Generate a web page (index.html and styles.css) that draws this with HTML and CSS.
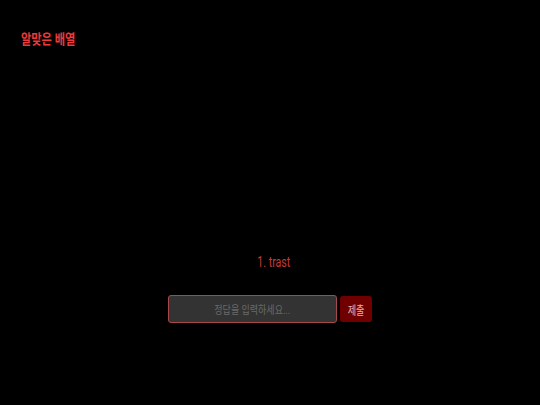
FILE: index.html
```html
<!DOCTYPE html>
<html lang="ko">
<head>
<meta charset="utf-8">
<link rel="stylesheet" href="styles.css">
</head>
<body>
<div class="page">
  <header class="header">
    <h1 class="title"><span class="squeeze">알맞은 배열</span></h1>
  </header>
  <main class="quiz">
    <p class="question"><span class="squeeze">1. trast</span></p>
    <form class="answer">
      <div class="field"><span class="placeholder squeeze">정답을 입력하세요...</span></div>
      <button type="button" class="submit"><span class="squeeze">제출</span></button>
    </form>
  </main>
</div>
</body>
</html>
```
FILE: styles.css
```css
html, body {
  margin: 0;
  padding: 0;
  background: #000;
}
.page {
  width: 540px;
  height: 405px;
  font-family: Roboto, "Noto Sans CJK KR", sans-serif;
  display: flex;
  flex-direction: column;
}
.squeeze {
  display: inline-block;
  transform: scaleX(0.76);
}
.header {
  padding: 30px 0 0 21px;
}
.title {
  margin: 0;
  font-size: 14px;
  font-weight: 700;
  line-height: 18px;
  color: #ee3a3a;
}
.title .squeeze {
  transform-origin: left center;
  transform: scaleX(0.8);
}
.quiz {
  display: flex;
  flex-direction: column;
  align-items: center;
  margin-top: 205px;
}
.question {
  margin: 0 0 0 8px;
  font-size: 14px;
  line-height: 18px;
  color: #c83a3a;
}
.answer {
  display: flex;
  align-items: center;
  gap: 3px;
  margin: 24px 0 0 0;
}
.field {
  box-sizing: border-box;
  width: 169px;
  height: 28px;
  background: #333;
  border: 1.5px solid #a84848;
  border-radius: 3px;
  display: flex;
  align-items: center;
  justify-content: center;
}
.placeholder {
  font-size: 11px;
  color: #6a6a6a;
  transform: scaleX(0.82);
}
.submit {
  box-sizing: border-box;
  width: 32px;
  height: 26px;
  padding: 0;
  border: none;
  border-radius: 3px;
  background: #700000;
  color: #e6b0b0;
  font-family: Roboto, "Noto Sans CJK KR", sans-serif;
  font-size: 12px;
}
```
